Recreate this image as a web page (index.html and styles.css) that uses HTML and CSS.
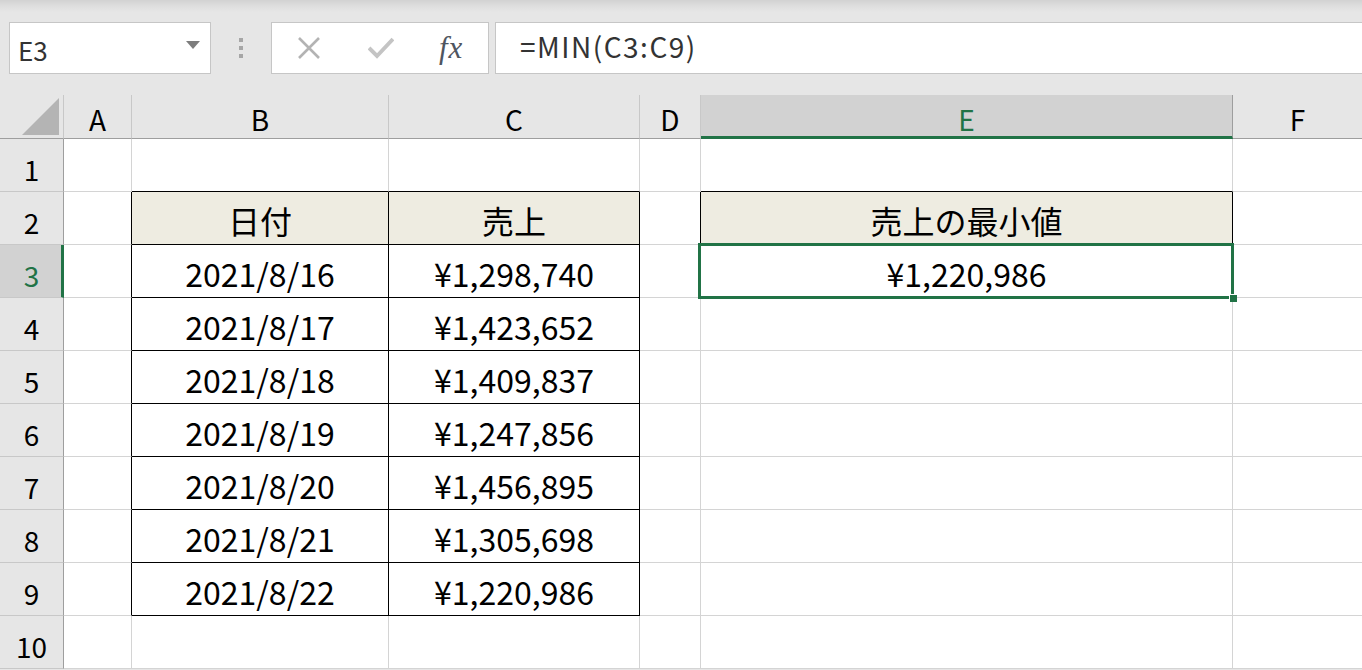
FILE: index.html
```html
<!DOCTYPE html>
<html>
	<head>
		<meta charset="utf-8" />
		<title>Excel</title>
		<link rel="stylesheet" href="styles.css">
	</head>
	<body>
		<div class="toolbar">
			<div class="name-box">
				<span class="name">E3</span>
				<span class="arrow"></span>
			</div>
			<div class="grip">
				<i></i><i></i><i></i>
			</div>
			<div class="fx-box">
				<svg class="icon" width="24" height="22" viewBox="0 0 24 22">
					<path d="M2 1 L22 21 M22 1 L2 21" stroke="#b3b3b3" stroke-width="2.6" fill="none"/>
				</svg>
				<svg class="icon" width="26" height="22" viewBox="0 0 26 22">
					<path d="M1 11 L9 19 L25 2" stroke="#c4c4c4" stroke-width="4" fill="none"/>
				</svg>
				<span class="fx">fx</span>
			</div>
			<div class="formula">=MIN(C3:C9)</div>
		</div>

		<div class="sheet">
			<!-- 列見出し -->
			<div class="corner"><span class="tri"></span></div>
			<div class="col-head">A</div>
			<div class="col-head">B</div>
			<div class="col-head">C</div>
			<div class="col-head">D</div>
			<div class="col-head sel">E</div>
			<div class="col-head">F</div>

			<!-- 1 -->
			<div class="row-head">1</div>
			<div class="cell"></div>
			<div class="cell bb"></div>
			<div class="cell bb"></div>
			<div class="cell"></div>
			<div class="cell bb"></div>
			<div class="cell"></div>

			<!-- 2 -->
			<div class="row-head">2</div>
			<div class="cell br"></div>
			<div class="cell th">日付</div>
			<div class="cell th">売上</div>
			<div class="cell br"></div>
			<div class="cell th">売上の最小値</div>
			<div class="cell"></div>

			<!-- 3 -->
			<div class="row-head sel">3</div>
			<div class="cell br"></div>
			<div class="cell td">2021/8/16</div>
			<div class="cell td">¥1,298,740</div>
			<div class="cell"></div>
			<div class="cell active">¥1,220,986<div class="select"><span class="handle"></span></div></div>
			<div class="cell"></div>

			<!-- 4 -->
			<div class="row-head">4</div>
			<div class="cell br"></div>
			<div class="cell td">2021/8/17</div>
			<div class="cell td">¥1,423,652</div>
			<div class="cell"></div>
			<div class="cell"></div>
			<div class="cell"></div>

			<!-- 5 -->
			<div class="row-head">5</div>
			<div class="cell br"></div>
			<div class="cell td">2021/8/18</div>
			<div class="cell td">¥1,409,837</div>
			<div class="cell"></div>
			<div class="cell"></div>
			<div class="cell"></div>

			<!-- 6 -->
			<div class="row-head">6</div>
			<div class="cell br"></div>
			<div class="cell td">2021/8/19</div>
			<div class="cell td">¥1,247,856</div>
			<div class="cell"></div>
			<div class="cell"></div>
			<div class="cell"></div>

			<!-- 7 -->
			<div class="row-head">7</div>
			<div class="cell br"></div>
			<div class="cell td">2021/8/20</div>
			<div class="cell td">¥1,456,895</div>
			<div class="cell"></div>
			<div class="cell"></div>
			<div class="cell"></div>

			<!-- 8 -->
			<div class="row-head">8</div>
			<div class="cell br"></div>
			<div class="cell td">2021/8/21</div>
			<div class="cell td">¥1,305,698</div>
			<div class="cell"></div>
			<div class="cell"></div>
			<div class="cell"></div>

			<!-- 9 -->
			<div class="row-head">9</div>
			<div class="cell br"></div>
			<div class="cell td">2021/8/22</div>
			<div class="cell td">¥1,220,986</div>
			<div class="cell"></div>
			<div class="cell"></div>
			<div class="cell"></div>

			<!-- 10 -->
			<div class="row-head">10</div>
			<div class="cell"></div>
			<div class="cell"></div>
			<div class="cell"></div>
			<div class="cell"></div>
			<div class="cell"></div>
			<div class="cell"></div>
		</div>
	</body>
</html>
```

FILE: styles.css
```css
body{
	margin: 0;
	background-color: #e6e6e6;
	font-family: "Noto Sans CJK JP", "Noto Sans", sans-serif;
	overflow: hidden;
}

/* 数式バー */
.toolbar{
	height: 95px;
	box-sizing: border-box;
	padding: 22px 0 0 9px;
	display: flex;
	align-items: flex-start;
	background: linear-gradient(#d2d2d2 0px, #dedede 6px, #e6e6e6 12px);
}

.name-box{
	width: 202px;
	height: 52px;
	box-sizing: border-box;
	border: 1px solid #c6c6c6;
	background-color: #fff;
	display: flex;
	align-items: center;
	justify-content: space-between;
	padding: 0 10px 0 8px;
}

.name{
	font-size: 26px;
	color: #333;
	padding-top: 2px;
}

.arrow{
	width: 0;
	height: 0;
	border-left: 7px solid transparent;
	border-right: 7px solid transparent;
	border-top: 8px solid #7d7d7d;
	margin-bottom: 6px;
}

.grip{
	width: 60px;
	height: 52px;
	display: flex;
	flex-direction: column;
	align-items: center;
	justify-content: center;
	gap: 4px;
}

.grip i{
	width: 4px;
	height: 4px;
	background-color: #a6a6a6;
}

.fx-box{
	width: 218px;
	height: 52px;
	box-sizing: border-box;
	border: 1px solid #c6c6c6;
	background-color: #fff;
	display: flex;
	align-items: center;
	padding: 0 0 0 25px;
}

.fx-box .icon{
	margin-right: 47px;
}

.fx-box .icon + .icon{
	margin-right: 45px;
}

.fx{
	font-family: "Liberation Serif", serif;
	font-style: italic;
	font-size: 31px;
	color: #4f5560;
	letter-spacing: 1px;
}

.formula{
	flex: 1;
	height: 52px;
	box-sizing: border-box;
	margin-left: 6px;
	margin-right: -2px;
	border: 1px solid #c6c6c6;
	background-color: #fff;
	font-size: 28px;
	letter-spacing: 1.5px;
	color: #333;
	padding: 5px 0 0 24px;
	line-height: 36px;
}

/* シート */
.sheet{
	display: grid;
	grid-template-columns: 64px 68px 257px 251px 61px 532px 130px;
	grid-template-rows: 44px repeat(10, 53px);
	background-color: #fff;
}

.sheet > div{
	box-sizing: border-box;
}

.corner{
	background-color: #e6e6e6;
	border-right: 1px solid #c8c8c8;
	border-bottom: 1px solid #9e9e9e;
	position: relative;
}

.corner .tri{
	position: absolute;
	right: 4px;
	bottom: 3px;
	width: 37px;
	height: 37px;
	background-color: #b4b4b4;
	clip-path: polygon(100% 0, 100% 100%, 0 100%);
}

.col-head{
	background-color: #e6e6e6;
	border-right: 1px solid #c8c8c8;
	border-bottom: 1px solid #9e9e9e;
	font-size: 28px;
	color: #000;
	text-align: center;
	line-height: 48px;
}

.col-head.sel{
	background-color: #d2d2d2;
	border-bottom: 3px solid #217346;
	color: #217346;
	border-right-color: #9e9e9e;
}

.row-head{
	background-color: #e6e6e6;
	border-right: 1px solid #9e9e9e;
	border-bottom: 1px solid #c8c8c8;
	font-size: 28px;
	text-align: center;
	line-height: 60px;
	color: #000;
}

.row-head.sel{
	background-color: #d2d2d2;
	border-right: 3px solid #217346;
	color: #217346;
	padding-left: 2px;
}

.cell{
	border-right: 1px solid #d4d4d4;
	border-bottom: 1px solid #d4d4d4;
	font-size: 32px;
	text-align: center;
	line-height: 57px;
	color: #000;
}

.bb{
	border-bottom-color: #000;
}

.br{
	border-right-color: #000;
}

.th{
	background-color: #eeece1;
	border-right-color: #000;
	border-bottom-color: #000;
	line-height: 56px;
}

.td{
	border-right-color: #000;
	border-bottom-color: #000;
}

.active{
	position: relative;
}

.select{
	position: absolute;
	top: -2px;
	left: -3px;
	right: -2px;
	bottom: -2px;
	border: 3px solid #217346;
}

.handle{
	position: absolute;
	right: -6px;
	bottom: -6px;
	width: 7px;
	height: 7px;
	background-color: #217346;
	border-left: 1px solid #fff;
	border-top: 1px solid #fff;
}
```
